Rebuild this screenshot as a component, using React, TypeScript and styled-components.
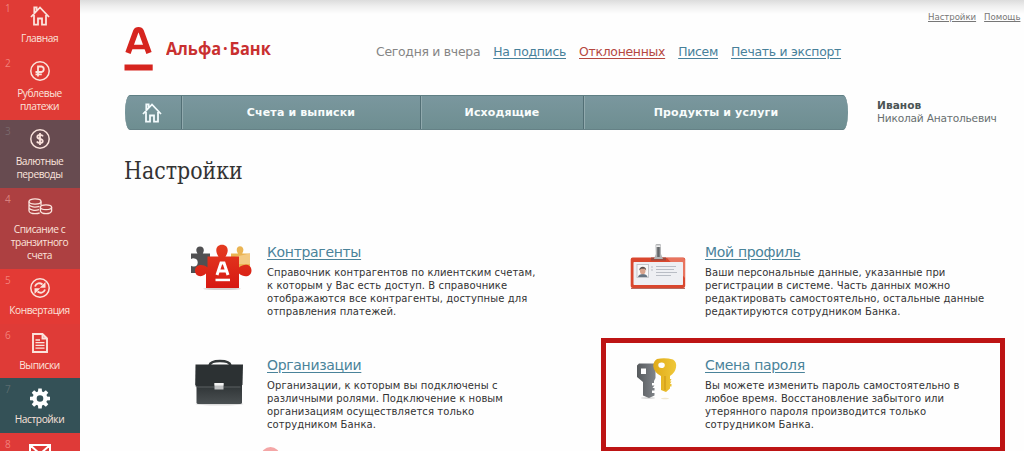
import type { ReactNode } from "react";
import styled, { createGlobalStyle } from "styled-components";

const GlobalStyle = createGlobalStyle`
	* {
		box-sizing: border-box;
	}

	body {
		margin: 0;
		overflow: hidden;
		background: #fefefe;
		font-family: "DejaVu Sans", Verdana, sans-serif;
	}

	svg {
		display: block;
		overflow: visible;
	}
`;

const Page = styled.div`
	position: relative;
	display: flex;
	width: 1024px;
	height: 451px;
	overflow: hidden;
`;

const Sidebar = styled.nav`
	flex: 0 0 80px;
	height: 451px;
	overflow: hidden;
	background: #e03b36;
`;

const SideList = styled.div`
	margin-top: -3px;
`;

const SideItem = styled.a<{ $tone: string; $lines: number }>`
	display: grid;
	grid-template-columns: 16px 1fr 16px;
	grid-template-rows: 35px auto;
	justify-items: center;
	height: ${({ $lines }) => 41.4 + $lines * 13.3}px;
	background: ${({ $tone }) => $tone};
	color: #fbe3dc;
`;

const SideNumber = styled.span`
	justify-self: start;
	padding: 5px 0 0 5px;
	font-family: "Open Sans", sans-serif;
	font-size: 10px;
	line-height: 12px;
	color: rgba(255, 190, 180, 0.55);
`;

const SideNumberDark = styled(SideNumber)`
	color: rgba(150, 150, 150, 0.4);
`;

const SideIcon = styled.span`
	padding-top: 9px;
	height: 35px;
`;

const SideLabel = styled.span`
	grid-column: 1 / -1;
	padding-right: 1px;
	font-family: "Open Sans", sans-serif;
	font-size: 10.2px;
	letter-spacing: -0.45px;
	line-height: 13.3px;
	text-align: center;
	white-space: pre;
`;

const Main = styled.main`
	flex: 1;
	min-width: 0;
	padding: 11px 0 0 44px;
	background: linear-gradient(#dcdcdc 0, #eeeeee 6px, #fefefe 14px);
`;

const Header = styled.header`
	display: flex;
	height: 84px;
`;

const Logo = styled.div`
	display: flex;
	width: 252px;
	padding-top: 16px;
`;

const LogoName = styled.span`
	margin: 7px 0 0 13px;
	font-family: "Open Sans", sans-serif;
	font-size: 18px;
	font-weight: 700;
	line-height: 28px;
	color: #c93030;
	white-space: nowrap;
	transform: scaleX(0.91);
	transform-origin: left;
`;

const LogoDot = styled.span`
	margin: 0 2px;
`;

const Tasks = styled.div`
	display: flex;
	gap: 13px;
	width: 552px;
	padding-top: 32px;
	font-size: 12.4px;
	letter-spacing: -0.26px;
	line-height: 17px;
	color: #858585;
	white-space: nowrap;
`;

const TaskLink = styled.a<{ $alert?: boolean }>`
	color: ${({ $alert }) => ($alert ? "#b5473f" : "#47809a")};
	text-decoration: underline;
	text-underline-offset: 2px;
`;

const Service = styled.div`
	display: flex;
	gap: 8px;
	font-size: 8.6px;
	letter-spacing: -0.05px;
	line-height: 13px;
	color: #777;
	text-decoration: underline;
`;

const MenuRow = styled.div`
	display: flex;
	align-items: center;
`;

const Menu = styled.nav`
	display: flex;
	width: 723px;
	height: 35px;
	border-top: 1px solid #5f7f84;
	border-bottom: 1px solid #658186;
	border-radius: 5px / 17px;
	background: linear-gradient(#7a979e, #6e8e91);
	overflow: hidden;
	margin-left: 1px;
`;

const MenuItem = styled.a<{ $width: number }>`
	display: flex;
	align-items: center;
	justify-content: center;
	width: ${({ $width }) => $width}px;
	border-right: 1px solid #526f75;
	box-shadow: inset 1px 0 #91aaae;
	font-size: 11px;
	font-weight: 700;
	letter-spacing: 0.14px;
	color: #f8fcfc;
	white-space: nowrap;

	&:first-child {
		box-shadow: none;
		padding-right: 3px;
	}

	&:last-child {
		border-right: none;
	}
`;

const User = styled.div`
	margin-left: 29px;
	margin-top: -2px;
	font-size: 10.6px;
	letter-spacing: -0.2px;
	line-height: 13px;
	color: #686f70;
	white-space: nowrap;
`;

const UserSurname = styled.strong`
	display: block;
	letter-spacing: 0.05px;
	color: #4b5555;
`;

const Title = styled.h1`
	margin: 23px 0 0;
	font-family: "DejaVu Serif", serif;
	font-size: 24.5px;
	font-weight: 400;
	line-height: 36px;
	color: #333;
	transform: scaleX(0.838);
	transform-origin: left;
`;

const Cards = styled.section`
	display: grid;
	grid-template-columns: 404px 404px;
	grid-auto-rows: 113px;
	column-gap: 34px;
	padding: 36px 0 0 39px;
`;

const Card = styled.article<{ $selected?: boolean }>`
	display: flex;
	height: 114px;
	padding: 13px 0 0 24px;
	border: 5px solid ${({ $selected }) => ($selected ? "#bd1414" : "transparent")};
`;

const CardIcon = styled.div`
	flex: 0 0 75px;
`;

const CardTitle = styled.a`
	display: block;
	font-size: 14px;
	letter-spacing: -0.32px;
	line-height: 18px;
	color: #4a839a;
	text-decoration: underline;
	text-underline-offset: 2px;
`;

const CardText = styled.p`
	margin: 5px 0 0;
	font-size: 10px;
	letter-spacing: 0.09px;
	line-height: 13px;
	color: #333;
	white-space: pre;
`;

const Marker = styled.div`
	position: absolute;
	left: 261px;
	top: 447px;
	width: 19px;
	height: 19px;
	border-radius: 50%;
	background: #f4a6a6;
`;

const HomeIcon = ({ color = "#fbe3dc" }: { color?: string }) => (
	<svg width="20" height="20" viewBox="0 0 20 20" fill="none" stroke={color} strokeWidth="1.8">
		<path d="M1 11 10 1.5 19 11M4.3 8V1.3H6.6V5M4 9V18.7H8V12.5H12V18.7H16V9" />
	</svg>
);

const RubleIcon = () => (
	<svg width="20" height="20" viewBox="0 0 20 20" fill="none" stroke="currentColor">
		<circle cx="10" cy="10" r="9.2" strokeWidth="1.5" />
		<path d="M8 15.5V5.5H11.5A2.8 2.8 0 0 1 11.5 11H5.5M5.5 13.4H11.8" strokeWidth="1.8" />
	</svg>
);

const DollarIcon = () => (
	<svg width="20" height="20" viewBox="0 0 20 20" fill="none" stroke="currentColor">
		<circle cx="10" cy="10" r="9.2" strokeWidth="1.5" />
		<path
			d="M13 7.3C12.5 6.3 11.5 5.9 10 5.9 6.5 5.9 6.4 9.3 10 9.9 13.8 10.6 13.5 14 10 14 8.4 14 7.4 13.5 6.8 12.5M10 4V16"
			strokeWidth="1.8"
		/>
	</svg>
);

const CoinsIcon = () => (
	<svg width="26" height="18" viewBox="0 -1 26 18" fill="none" stroke="currentColor" strokeWidth="1.3">
		<ellipse cx="8" cy="3.5" rx="6" ry="2.6" />
		<path d="M2 3.5V12.8C2 14.5 5 15.7 8 15.7 9.8 15.7 11.5 15.4 12.7 14.8M14 3.5V7.5M2 6.5C3 9.1 8 9.7 12.5 8.3M2 9.7C3 12.2 8 12.9 12 11.7" />
		<ellipse cx="19" cy="9.3" rx="5.6" ry="2.4" />
		<path d="M13.4 9.3V13C14.5 16.5 23.5 16.5 24.6 13V9.3" />
	</svg>
);

const ExchangeIcon = () => (
	<svg width="20" height="20" viewBox="0 0 20 20" fill="none" stroke="currentColor">
		<circle cx="10" cy="10" r="9.2" strokeWidth="1.5" />
		<path d="M5 8.5C6.2 5 9.8 4.4 12.5 6.5M15 11.5C13.8 15 10.2 15.6 7.5 13.5" strokeWidth="1.9" />
		<path d="M15.5 4V9.8H9.7ZM4.5 16V10.2H10.3Z" fill="currentColor" stroke="none" />
	</svg>
);

const DocumentIcon = () => (
	<svg width="18" height="20" viewBox="0 0 18 20" fill="none" stroke="currentColor">
		<path d="M2 1H11.5L16 5.5V19H2ZM11.5 1V5.5H16" strokeWidth="1.9" />
		<path d="M4.5 7H9M4.5 9.7H13.5M4.5 12.4H13.5M4.5 15.1H13.5" strokeWidth="1.3" />
	</svg>
);

const teeth = [0, 45, 90, 135, 180, 225, 270, 315];

const GearIcon = () => (
	<svg width="20" height="20" viewBox="0 -1.5 20 20" fill="#fff">
		<circle cx="10" cy="10" r="5.3" fill="none" stroke="#fff" strokeWidth="4" />
		{teeth.map((angle) => (
			<path key={angle} d="M7.9 4 8.3 0H11.7L12.1 4Z" transform={`rotate(${angle} 10 10)`} />
		))}
	</svg>
);

const MailIcon = () => (
	<svg width="22" height="16" viewBox="0 -1 22 16" fill="none" stroke="#fff" strokeWidth="2">
		<path d="M1 2H21V15H1ZM1 2 11 11 21 2" />
	</svg>
);

const LogoMark = () => (
	<svg width="29" height="44" viewBox="0 0 29 44">
		<path
			d="M4 26 11.8 4.5Q12.6 2.8 14.5 2.8T17.2 4.5L25 26"
			fill="none"
			stroke="#d6251f"
			strokeWidth="5.6"
			strokeLinejoin="round"
		/>
		<path d="M7 20H22" stroke="#d6251f" strokeWidth="4.5" />
		<path d="M.5 37.5H28.7V43.5H.5Z" fill="#d6251f" />
	</svg>
);

const PuzzleIcon = () => (
	<svg width="62" height="48" viewBox="2 -1 62 48">
		<defs>
			<linearGradient id="puzzle-red" x2="0" y2="1">
				<stop stopColor="#e43b20" />
				<stop offset="1" stopColor="#d71912" />
			</linearGradient>
		</defs>
		<ellipse cx="32" cy="44.8" rx="19" ry="1.3" fill="#d5d0ce" />
		<path
			d="M1 9.5H7.5C5 6 6.5 2.5 10 2.5S15 6 12.8 9.5H20V29H1V21A3.5 3.5 0 1 0 1 15Z"
			fill="#505052"
		/>
		<circle cx="3.7" cy="18.5" r="4" fill="#fff" />
		<path d="M41 9.5H48C45.5 5.5 47 2.2 50 2.2S54.7 5.5 52.2 9.5H60V29H41Z" fill="#eab453" />
		<path d="M44 13L60 9.5V20H49Z" fill="#f3ca83" />
		<path
			d="M17.5 12.5H28.5C24.5 7 26 .8 32 .8S39.5 7 35.5 12.5H49V23.5C54 19 61.5 20 61.5 26.5S54 34 49 29.5V44H16V29.5C11 34.5 5 32 5 26.5S12 19 17.5 23.5Z"
			fill="url(#puzzle-red)"
		/>
		<path d="M27 31 31 19H34L38 31M28.7 27H36.5" fill="none" stroke="#fff" strokeWidth="3" />
		<path d="M25.5 34.7H40V37.2H25.5Z" fill="#fff" />
	</svg>
);

const BriefcaseIcon = () => (
	<svg width="62" height="48" viewBox="2.5 -2.5 62 48">
		<defs>
			<linearGradient id="leather" x2="0" y2="1">
				<stop stopColor="#2b3032" />
				<stop offset="1" stopColor="#4a5052" />
			</linearGradient>
		</defs>
		<ellipse cx="30" cy="45.5" rx="24" ry="1.5" fill="#ddd" />
		<path d="M20 7C21 1 40 1 41 7" fill="none" stroke="#333839" strokeWidth="2.5" />
		<path d="M7 24H52.5V44Q52.5 45.5 50.5 45.5H9Q7 45.5 7 44Z" fill="url(#leather)" />
		<path d="M6 6H53.5L53 26Q52.5 28 50.5 28H8Q6 28 5.7 26Z" fill="#2c3133" />
		<path d="M6 27.5Q7 28.5 9 28.5H51" fill="none" stroke="#5b6163" />
		<path d="M25 24.5H34V31H25Z" fill="#bfc1c2" />
		<path d="M25 24.5H34V27H25Z" fill="#f4f4f4" />
	</svg>
);

const BadgeIcon = () => (
	<svg width="56" height="48" viewBox="0 0 56 48">
		<rect x=".7" y="14.5" width="54.5" height="30.5" rx="2" fill="#d9472e" />
		<path d="M37 15H53Q55 15 55 18V35Z" fill="#e8745e" />
		<rect x="3.5" y="19" width="49.5" height="23" rx=".8" fill="#eeeff3" />
		<path d="M1 45.5H55" stroke="#b66b60" />
		<rect x="7" y="21.5" width="11.5" height="13" fill="#f8f8f8" stroke="#b9bbc0" strokeWidth=".8" />
		<path d="M8 34C8.5 30 17 30 17.5 34Z" fill="#667482" />
		<ellipse cx="12.7" cy="27.7" rx="2.8" ry="3.5" fill="#d9a48d" />
		<path d="M9.3 27.5C9 22.5 16.5 22.5 16.2 27.5L14.8 25.8H11Z" fill="#59504d" />
		<path
			d="M21 24H23M26 23.5H46M21 27H23M26 26.5H44M26 29.5H47M26 32.5H41"
			stroke="#b9bdc5"
			strokeWidth="1"
		/>
		<path d="M21 14.5H36V17.5H21Z" fill="#9a4a3e" />
		<path d="M25.5 2.2Q25.5 1 27 1H29.5Q31 1 31 2.2V11L33 16H24L25.8 11Z" fill="#b2b4b6" />
		<path d="M27.2 4H29.7V14H27.2Z" fill="#63676a" />
		<path d="M26.2 3.2H30.5" stroke="#f3f3f3" strokeWidth="1.5" />
	</svg>
);

const KeysIcon = () => (
	<svg width="56" height="48" viewBox="0 0 56 48">
		<defs>
			<linearGradient id="key-gold">
				<stop stopColor="#e0aa18" />
				<stop offset="1" stopColor="#efc83a" />
			</linearGradient>
			<linearGradient id="key-steel">
				<stop stopColor="#565a5d" />
				<stop offset="1" stopColor="#81858a" />
			</linearGradient>
		</defs>
		<ellipse cx="18" cy="42" rx="7" ry="1" fill="#ddd" />
		<ellipse cx="35" cy="42.5" rx="4" ry=".7" fill="#f1e8cf" />
		<path
			fillRule="evenodd"
			d="M9 7.5H25.5V22L24 25V27H22V29.5H24.5L22.5 32H24.5V34.5H22V37H24.5V39.5L19 42 13 39.5V26L7 21V9.5ZM11 12.5V18H16V12.5Z"
			fill="url(#key-steel)"
		/>
		<path
			fillRule="evenodd"
			d="M27 3Q35 1.5 43 3.5Q47 6 46 11.5Q45 17 40 20V23H41.5L40 25.5H41.5L40 28H41.5V30.5H40V32.5L36 36 31 34V20Q24 16.5 23.2 10Q23.5 5 27 3ZM28.3 9Q28.3 12 31.5 12T34.8 9.2 31.5 6.5 28.3 9Z"
			fill="url(#key-gold)"
		/>
		<path d="M35 20V34" stroke="#c99314" strokeWidth="1" />
	</svg>
);

type SideEntry = {
	label: string;
	icon: ReactNode;
	tone: string;
	dark?: boolean;
};

const sideEntries: SideEntry[] = [
	{ label: "Главная", icon: <HomeIcon />, tone: "#e03b36" },
	{ label: "Рублевые\nплатежи", icon: <RubleIcon />, tone: "#e03b36" },
	{ label: "Валютные\nпереводы", icon: <DollarIcon />, tone: "#674b50", dark: true },
	{ label: "Списание с\nтранзитного\nсчета", icon: <CoinsIcon />, tone: "#ad4041" },
	{ label: "Конвертация", icon: <ExchangeIcon />, tone: "#e33a35" },
	{ label: "Выписки", icon: <DocumentIcon />, tone: "#df3b37" },
	{ label: "Настройки", icon: <GearIcon />, tone: "#345157", dark: true },
	{ label: "", icon: <MailIcon />, tone: "#df3a38" },
];

const cards = [
	{
		title: "Контрагенты",
		icon: <PuzzleIcon />,
		text: "Справочник контрагентов по клиентским счетам,\nк которым у Вас есть доступ. В справочнике\nотображаются все контрагенты, доступные для\nотправления платежей.",
	},
	{
		title: "Мой профиль",
		icon: <BadgeIcon />,
		text: "Ваши персональные данные, указанные при\nрегистрации в системе. Часть данных можно\nредактировать самостоятельно, остальные данные\nредактируются сотрудником Банка.",
	},
	{
		title: "Организации",
		icon: <BriefcaseIcon />,
		text: "Организации, к которым вы подключены с\nразличными ролями. Подключение к новым\nорганизациям осуществляется только\nсотрудником Банка.",
	},
	{
		title: "Смена пароля",
		icon: <KeysIcon />,
		text: "Вы можете изменить пароль самостоятельно в\nлюбое время. Восстановление забытого или\nутерянного пароля производится только\nсотрудником Банка.",
		selected: true,
	},
];

export default function App() {
	return (
		<Page>
			<GlobalStyle />
			<Sidebar>
				<SideList>
					{sideEntries.map(({ label, icon, tone, dark }, index) => {
						const Number = dark ? SideNumberDark : SideNumber;
						return (
							<SideItem key={index} $tone={tone} $lines={label.split("\n").length}>
								<Number>{index + 1}</Number>
								<SideIcon>{icon}</SideIcon>
								<SideLabel>{label}</SideLabel>
							</SideItem>
						);
					})}
				</SideList>
			</Sidebar>

			<Main>
				<Header>
					<Logo>
						<LogoMark />
						<LogoName>
							Альфа<LogoDot>·</LogoDot>Банк
						</LogoName>
					</Logo>
					<Tasks>
						<span>Сегодня и вчера</span>
						<TaskLink>На подпись</TaskLink>
						<TaskLink $alert>Отклоненных</TaskLink>
						<TaskLink>Писем</TaskLink>
						<TaskLink>Печать и экспорт</TaskLink>
					</Tasks>
					<Service>
						<a>Настройки</a>
						<a>Помощь</a>
					</Service>
				</Header>

				<MenuRow>
					<Menu>
						<MenuItem $width={57}>
							<HomeIcon color="#f3fbfd" />
						</MenuItem>
						<MenuItem $width={239}>Счета и выписки</MenuItem>
						<MenuItem $width={163}>Исходящие</MenuItem>
						<MenuItem $width={264}>Продукты и услуги</MenuItem>
					</Menu>
					<User>
						<UserSurname>Иванов</UserSurname>
						Николай Анатольевич
					</User>
				</MenuRow>

				<Title>Настройки</Title>

				<Cards>
					{cards.map(({ title, icon, text, selected }) => (
						<Card key={title} $selected={selected}>
							<CardIcon>{icon}</CardIcon>
							<div>
								<CardTitle>{title}</CardTitle>
								<CardText>{text}</CardText>
							</div>
						</Card>
					))}
				</Cards>
			</Main>
			<Marker />
		</Page>
	);
}
